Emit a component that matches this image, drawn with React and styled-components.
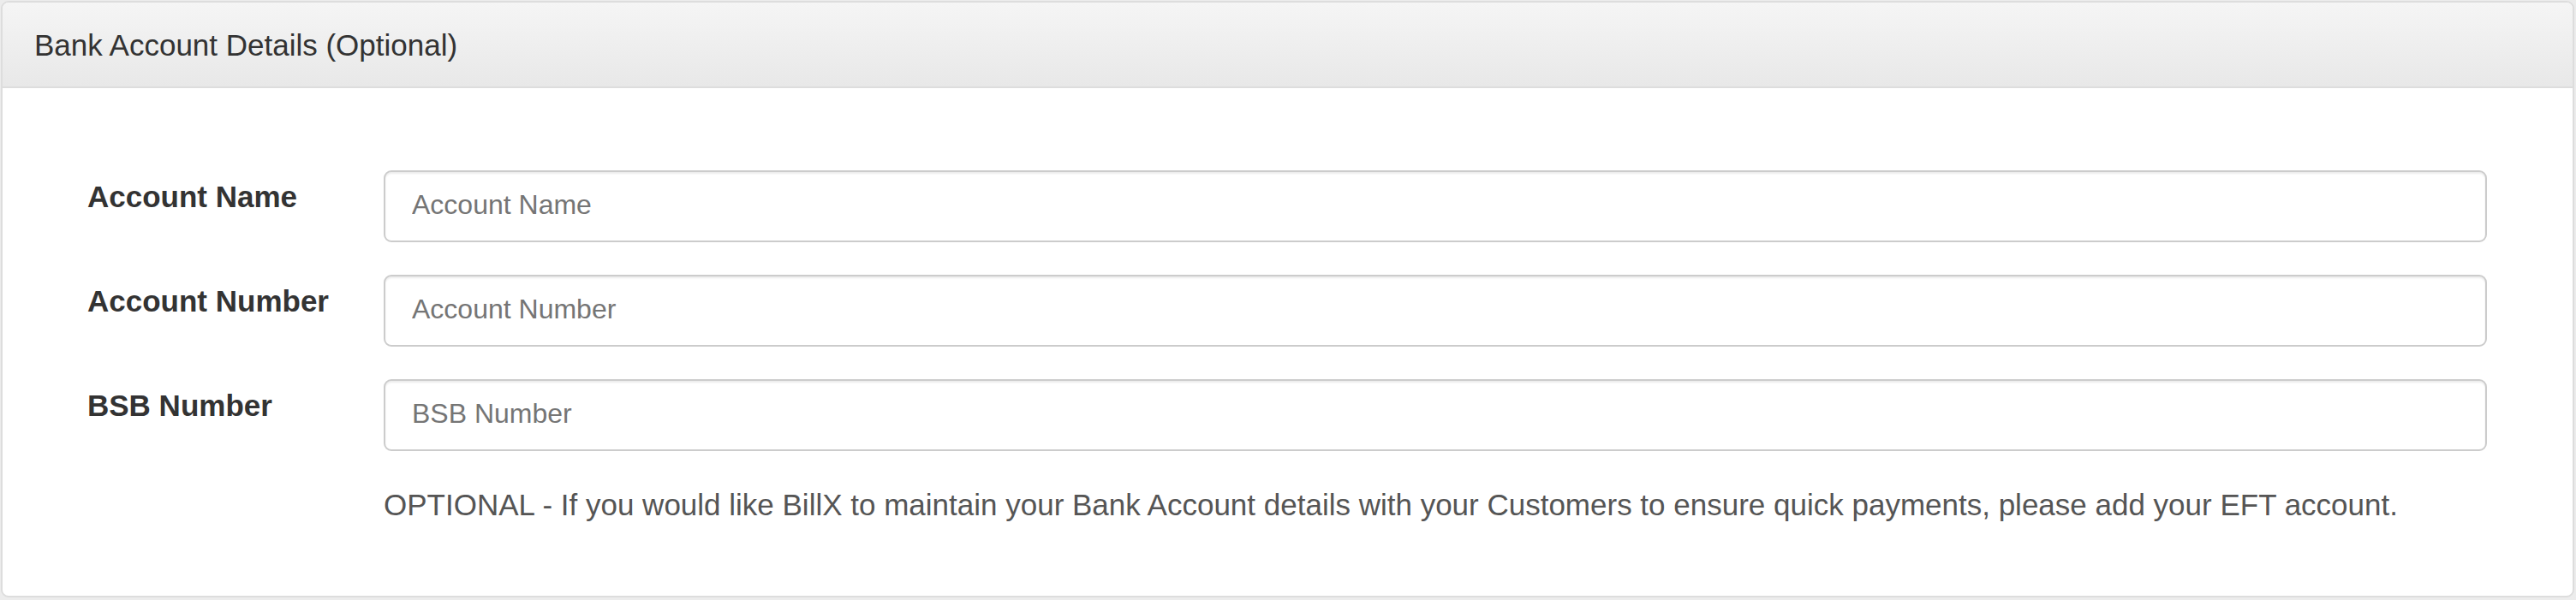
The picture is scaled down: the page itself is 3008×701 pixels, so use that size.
import React from "react";
import styled, { createGlobalStyle } from "styled-components";

const GlobalStyle = createGlobalStyle`
  html, body {
    margin: 0;
    padding: 0;
    background: #ececec;
  }
  body {
    font-family: "Liberation Sans", Arial, Helvetica, sans-serif;
    color: #333;
  }
  * {
    box-sizing: border-box;
  }
`;

const Page = styled.div`
  padding: 1px 2px 1px 1px;
`;

const Panel = styled.section`
  background: #fff;
  border: 2px solid #dddddd;
  border-radius: 9px;
  height: 697px;
  overflow: hidden;
`;

const PanelHeading = styled.div`
  height: 100px;
  padding: 0 37px;
  display: flex;
  align-items: center;
  background: linear-gradient(to bottom, #f5f5f5 0%, #e8e8e8 100%);
  border-bottom: 2px solid #dddddd;
`;

const PanelTitle = styled.h3`
  margin: 0;
  font-size: 35px;
  font-weight: 400;
  line-height: 1.1;
  color: #333;
  padding-top: 2px;
`;

const PanelBody = styled.div`
  padding: 96px 100px 0 99px;
`;

const FormRow = styled.div`
  display: grid;
  grid-template-columns: 346px 1fr;
  align-items: start;
  margin-bottom: ${(p) => (p.$last ? "0" : "38px")};
`;

const Label = styled.label`
  font-size: 35px;
  font-weight: 700;
  line-height: 50px;
  color: #333;
  padding-top: 6px;
`;

const Input = styled.input`
  display: block;
  width: 100%;
  height: 84px;
  padding: 0 31px 3px;
  font-family: "Liberation Sans", Arial, Helvetica, sans-serif;
  font-size: 32px;
  color: #555;
  background: #fff;
  border: 2px solid #cccccc;
  border-radius: 9px;
  box-shadow: inset 0 2px 2px rgba(0, 0, 0, 0.075);
  outline: none;

  &::placeholder {
    color: #757575;
  }
`;

const HelpRow = styled.div`
  display: grid;
  grid-template-columns: 346px 1fr;
  margin-top: 38px;
`;

const HelpText = styled.p`
  grid-column: 2;
  margin: 0;
  font-size: 35px;
  line-height: 50px;
  color: #555;
`;

const fields = [
  { id: "accountName", label: "Account Name" },
  { id: "accountNumber", label: "Account Number" },
  { id: "bsbNumber", label: "BSB Number" },
];

const App = () => (
  <>
    <GlobalStyle />
    <Page>
      <Panel>
        <PanelHeading>
          <PanelTitle>Bank Account Details (Optional)</PanelTitle>
        </PanelHeading>
        <PanelBody>
          {fields.map((f, i) => (
            <FormRow key={f.id} $last={i === fields.length - 1}>
              <Label htmlFor={f.id}>{f.label}</Label>
              <Input id={f.id} type="text" placeholder={f.label} />
            </FormRow>
          ))}
          <HelpRow>
            <HelpText>
              OPTIONAL - If you would like BillX to maintain your Bank Account
              details with your Customers to ensure quick payments, please add
              your EFT account.
            </HelpText>
          </HelpRow>
        </PanelBody>
      </Panel>
    </Page>
  </>
);

export default App;
